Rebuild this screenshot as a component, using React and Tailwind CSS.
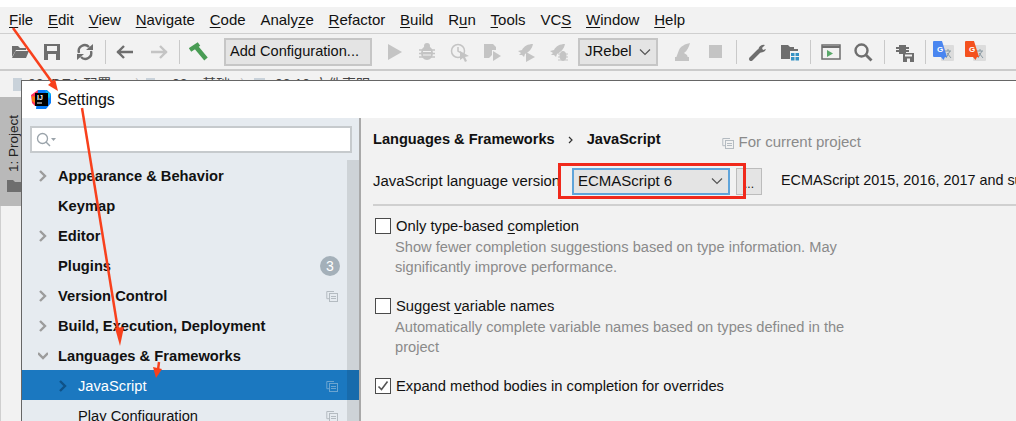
const menus = [
  ["", "F", "ile"],
  ["", "E", "dit"],
  ["", "V", "iew"],
  ["", "N", "avigate"],
  ["", "C", "ode"],
  ["Analy", "z", "e"],
  ["", "R", "efactor"],
  ["", "B", "uild"],
  ["R", "u", "n"],
  ["", "T", "ools"],
  ["VC", "S", ""],
  ["", "W", "indow"],
  ["", "H", "elp"],
];

const treeRows = [
  { label: "Appearance & Behavior", arrow: "right" },
  { label: "Keymap" },
  { label: "Editor", arrow: "right" },
  { label: "Plugins", badge: "3" },
  { label: "Version Control", arrow: "right", copy: true },
  { label: "Build, Execution, Deployment", arrow: "right" },
  { label: "Languages & Frameworks", arrow: "down" },
  { label: "JavaScript", arrow: "right", copy: true, child: true, selected: true },
  { label: "Play Configuration", copy: true, child: true },
];

const Icon = ({ children, className = "" }) => (
  <svg width="20" height="20" viewBox="0 0 20 20" className={className}>
    {children}
  </svg>
);

const Slot = ({ children, className = "" }) => (
  <div className={`w-[32px] h-[30px] shrink-0 flex items-center justify-center ${className}`}>{children}</div>
);

const Sep = ({ className = "" }) => <div className={`w-px h-[24px] bg-[#c9c9c9] shrink-0 ${className}`}></div>;

const Rocket = ({ color = "#c4c4c4" }) => (
  <path d="M17 2 C12 2 8 4 6 8 L2 9 L5 11 L3 13 L6 13 L8 15 L9 12 C13 10 16 7 17 2 Z" fill={color} />
);

const CopyIcon = ({ color = "#b4bbc1" }) => (
  <svg width="12" height="12" viewBox="0 0 12 12" className="shrink-0">
    <path d="M8 1.5H.8v7.2H3" fill="none" stroke={color} />
    <rect x="3.5" y="3.5" width="8" height="8" fill="none" stroke={color} />
    <path d="M5 6.5h5M5 8.5h5" stroke={color} />
  </svg>
);

const Chevron = ({ dir, color = "#9c9c9c" }) => (
  <svg width="10" height="12" viewBox="0 0 10 12">
    {dir === "down" ? (
      <path d="M0 3l5 5 5-5" fill="none" stroke={color} strokeWidth="2.4" />
    ) : (
      <path d="M2 1l5 5-5 5" fill="none" stroke={color} strokeWidth="2.4" />
    )}
  </svg>
);

const Check = ({ checked }) => (
  <div className="w-[16px] h-[16px] bg-white border border-[#4b4b4b] shrink-0 flex items-center justify-center">
    {checked && (
      <svg width="12" height="12" viewBox="0 0 12 12">
        <path d="M1.5 6.5l3 3 6-8" fill="none" stroke="#555" strokeWidth="1.6" />
      </svg>
    )}
  </div>
);

const Translate = ({ color }) => (
  <svg width="22" height="24" viewBox="0 0 22 24">
    <rect x="9" y="5" width="13" height="16" rx="1" fill="#dcdcdc" />
    <path d="M13 11h6M16 9v2M14 18l4-7M15 13l4 5" stroke="#8a9aa3" strokeWidth="1" fill="none" />
    <path d="M1 2a1 1 0 0 1 1-1h8l5 16H2a1 1 0 0 1-1-1z" fill={color} />
    <path d="M9 17h4l-1.5 3z" fill={color} />
    <text x="5" y="12" fontSize="8" fontWeight="700" fill="#fff" fontFamily="Liberation Sans">G</text>
  </svg>
);

function Toolbar() {
  return (
    <div className="h-[35px] bg-[#f2f2f2] flex items-center pl-[4px] border-b-2 border-[#cbcbcb] box-content">
      <Slot>
        <Icon>
          <path d="M2 4h6l2 2h6v2H6L2 15z" fill="#6e6e6e" />
          <path d="M5.500 9H19l-3 7H2z" fill="#6e6e6e" />
        </Icon>
      </Slot>
      <Slot>
        <Icon>
          <path fillRule="evenodd" d="M2 2h16v16H2zM5 4v5h10V4zM6 12v6h8v-6z" fill="#6e6e6e" />
        </Icon>
      </Slot>
      <Slot className="w-[33px]">
        <Icon>
          <path d="M4 11a6 6 0 0 1 10-6" fill="none" stroke="#6e6e6e" strokeWidth="2.400" />
          <path d="M16 9a6 6 0 0 1-10 6" fill="none" stroke="#6e6e6e" strokeWidth="2.400" />
          <path d="M11 8h7V2zM9 12H2v6z" fill="#6e6e6e" />
        </Icon>
      </Slot>
      <Sep className="ml-[4px]" />
      <Slot className="ml-[3px]">
        <Icon>
          <path d="M2 10h16M9 4l-6 6 6 6" fill="none" stroke="#6e6e6e" strokeWidth="2.400" />
        </Icon>
      </Slot>
      <Slot className="ml-[2px]">
        <Icon>
          <path d="M2 10h16M11 4l6 6-6 6" fill="none" stroke="#c4c4c4" strokeWidth="2.400" />
        </Icon>
      </Slot>
      <Sep className="ml-[4px]" />
      <Slot className="ml-[3px]">
        <Icon>
          <path d="M1 8L10 2M7 5l10 12" fill="none" stroke="#499c54" strokeWidth="4.500" />
        </Icon>
      </Slot>
      <div className="ml-[9px] w-[148px] h-[28px] bg-[#e4e4e4] border-2 border-[#c6c6c6] flex items-center pl-[4px] text-[14.600px] text-[#111] shrink-0">
        Add Configuration...
      </div>
      <Slot className="ml-[7px]">
        <Icon>
          <path d="M3 2l14 8-14 8z" fill="#c4c4c4" />
        </Icon>
      </Slot>
      <Slot>
        <Icon>
          <ellipse cx="10" cy="11" rx="6" ry="7" fill="#c4c4c4" />
          <circle cx="10" cy="4" r="3" fill="#c4c4c4" />
          <path d="M2 8h16M2 11.500h16M2 15h16" stroke="#c4c4c4" strokeWidth="1.600" />
          <path d="M6 9.500h8M6 13h8" stroke="#f2f2f2" />
        </Icon>
      </Slot>
      <Slot className="ml-[1px]">
        <Icon>
          <circle cx="8" cy="9" r="6.500" fill="none" stroke="#c4c4c4" strokeWidth="1.500" />
          <path d="M8 5v4l3 2" fill="none" stroke="#c4c4c4" strokeWidth="1.500" />
          <path d="M10 9l9 5-4 1 2 4-2 1-2-4-3 2z" fill="#c4c4c4" />
        </Icon>
      </Slot>
      <Slot>
        <Icon>
          <path d="M2 2h9l3 3v3h-4v5l-3 3H2z" fill="#c4c4c4" />
          <path d="M11 9l8 5-8 5z" fill="#c4c4c4" />
        </Icon>
      </Slot>
      <Slot className="ml-[2px]">
        <Icon>
          <Rocket />
          <path d="M10 10l9 5-9 5z" fill="#c4c4c4" />
        </Icon>
      </Slot>
      <Slot>
        <Icon>
          <Rocket />
          <ellipse cx="15" cy="14" rx="3.500" ry="5" fill="#c4c4c4" />
          <path d="M10 12h10M10 15h10M10 18h10" stroke="#c4c4c4" />
        </Icon>
      </Slot>
      <div className="ml-[4px] w-[80px] h-[28px] bg-[#e4e4e4] border-2 border-[#c6c6c6] flex items-center justify-between pl-[5px] pr-[5px] text-[15px] text-[#111] shrink-0">
        JRebel
        <svg width="12" height="8" viewBox="0 0 12 8">
          <path d="M1 1.500l5 5 5-5" fill="none" stroke="#555" strokeWidth="1.200" />
        </svg>
      </div>
      <Slot className="ml-[9px] w-[30px]">
        <Icon>
          <path d="M17 1C12 2 8 4 6 8L3 16h12l-1-3-3-2c3-2 5-6 6-10z" fill="#c4c4c4" />
          <path d="M2 15h14v4H2z" fill="#c4c4c4" />
        </Icon>
      </Slot>
      <Slot className="w-[30px]">
        <div className="w-[13px] h-[13px] bg-[#c4c4c4]"></div>
      </Slot>
      <Sep className="ml-[5px]" />
      <Slot className="ml-[5px]">
        <Icon>
          <path d="M3 17l8-8" stroke="#6e6e6e" strokeWidth="4" strokeLinecap="round" />
          <path d="M11 10a5 5 0 0 1 6-7l-3 3 1 2 3-1a5 5 0 0 1-7 3z" fill="#6e6e6e" />
        </Icon>
      </Slot>
      <Slot>
        <Icon>
          <path d="M1 3h7l2 2h4v2l4 0v2H10v8H1z" fill="#6e6e6e" />
          <path d="M11 11h3.500v3H11zM15.500 11H19v3h-3.500zM11 15h3.500v3.500H11zM15.500 15H19v3.500h-3.500z" fill="#3592c4" />
        </Icon>
      </Slot>
      <Sep className="ml-[4px]" />
      <Slot className="ml-[4px]">
        <Icon>
          <rect x="1" y="3" width="18" height="14" fill="none" stroke="#6e6e6e" strokeWidth="1.500" />
          <path d="M1 5h18" stroke="#6e6e6e" strokeWidth="2" />
          <path d="M6 8l6 3.500L6 15z" fill="#59a869" />
        </Icon>
      </Slot>
      <Slot>
        <Icon>
          <circle cx="8.500" cy="8.500" r="6" fill="none" stroke="#6e6e6e" strokeWidth="2.400" />
          <path d="M13 13l5.500 5.500" stroke="#6e6e6e" strokeWidth="2.800" />
        </Icon>
      </Slot>
      <Sep className="ml-[5px]" />
      <Slot className="ml-[4px]">
        <Icon>
          <path d="M1 5h3V3h7v2h3v2h-3v1h3v2h-3v2H4v-2H1V8h3V7H1z" fill="#6e6e6e" />
          <path fillRule="evenodd" d="M8 11h11v9H8zM10 12.500v2h7v-2zM12 16.500V20h3v-3.500z" fill="#6e6e6e" />
        </Icon>
      </Slot>
      <Sep className="ml-[4px]" />
      <Slot className="ml-[1px]">
        <Translate color="#4a86f0" />
      </Slot>
      <Slot>
        <Translate color="#f4511e" />
      </Slot>
    </div>
  );
}

function TreeRow({ row }) {
  return (
    <div
      className={`h-[30px] pt-[2px] flex items-center pr-[21px] ${row.selected ? "bg-[#1b78c0] text-white" : "text-[#111]"} ${row.child ? "pl-[36px]" : "pl-[16px]"}`}
    >
      <div className="w-[20px] shrink-0 flex items-center">
        {row.arrow && <Chevron dir={row.arrow} color={row.selected ? "#0f5288" : "#9c9c9c"} />}
      </div>
      <span className={`flex-1 text-[14.700px] ${row.child ? "" : "font-bold"}`}>{row.label}</span>
      {row.badge && (
        <span className="w-[20px] h-[20px] -mr-[2px] rounded-full bg-[#a4b0b9] text-white text-[14px] flex items-center justify-center">
          {row.badge}
        </span>
      )}
      {row.copy && <CopyIcon color={row.selected ? "#6ba4d0" : "#b4bbc1"} />}
    </div>
  );
}

function Option({ checked, label, mnemonic, desc, className = "" }) {
  return (
    <div className={className}>
      <div className="flex items-center gap-[5px] ml-[2px] text-[14.750px] text-[#111] h-[20px]">
        <Check checked={checked} />
        <span>
          {label[0]}
          {mnemonic && <span className="underline underline-offset-2">{mnemonic}</span>}
          {label[1]}
        </span>
      </div>
      {desc && <p className="ml-[22px] mt-[1px] w-[470px] text-[14.650px] leading-[20px] text-[#8a8a8a]">{desc}</p>}
    </div>
  );
}

export default function App() {
  return (
    <div className="relative w-[1016px] h-[421px] overflow-hidden bg-white font-['Liberation_Sans','Noto_Sans_CJK_SC',sans-serif]">
      <div className="h-[7px] bg-white"></div>
      {/* menu bar */}
      <div className="h-[26px] bg-[#f2f2f2] border-b border-[#cfcfcf] box-content flex items-center gap-[14.800px] pl-[9px] text-[15px] text-[#111]">
        {menus.map(([a, b, c]) => (
          <span key={a + b + c}>
            {a}
            <span className="underline underline-offset-2">{b}</span>
            {c}
          </span>
        ))}
      </div>
      <Toolbar />
      {/* navigation bar, mostly hidden by the dialog */}
      <div className="h-[26px] bg-[#f2f2f2] flex items-center pl-[13px] overflow-hidden whitespace-nowrap text-[14px] text-[#444]">
        <div className="w-[9px] h-[13px] bg-[#c9d2da] shrink-0"></div>
        <span className="ml-[6px] w-[107px] shrink-0 overflow-hidden">02.IDEA 配置</span>
        <span className="w-[11px] shrink-0 text-[#bbb]">〉</span>
        <div className="w-[9px] h-[13px] bg-[#c9d2da] shrink-0"></div>
        <span className="ml-[17px] w-[68px] shrink-0">03.x 基础</span>
        <span className="w-[14px] shrink-0 text-[#bbb]">〉</span>
        <div className="w-[11px] h-[13px] bg-[#c9d2da] shrink-0"></div>
        <span className="ml-[10px]">03.10 文件声明</span>
      </div>
      {/* project tool strip */}
      <div className="w-[21px] h-[109px] bg-[#b9b9b9] flex flex-col items-end pt-[18px]">
        <span className="[writing-mode:vertical-rl] rotate-180 text-[13.500px] leading-[14px] text-[#222]">1: Project</span>
        <svg width="14" height="12" viewBox="0 0 14 12" className="mt-[8px]">
          <path d="M0 0h6l2 2h6v10H0z" fill="#6e6e6e" />
        </svg>
      </div>
      <div className="w-[21px] h-[215px] bg-[#f2f2f2] border-l border-[#cfcfcf]"></div>

      {/* settings dialog */}
      <div className="absolute left-[21px] top-[80px] w-[995px] h-[341px] bg-white border-l border-t border-[#666] flex flex-col">
        <div className="h-[37px] shrink-0 flex items-center pl-[9px] gap-[5px] text-[16px] text-[#111]">
          <svg width="21" height="21" viewBox="0 0 21 21" className="shrink-0">
            <path d="M0 6l7-5 3 4-6 12-3-3z" fill="#fe315d" />
            <path d="M1 7l6 1-3 6-3-2z" fill="#f97a12" />
            <path d="M7 1h9l4 4v9l-5 6-10 0z" fill="#087cfa" />
            <path d="M14 1l6 4-2 5z" fill="#07c3f2" />
            <rect x="4" y="4" width="13" height="13" fill="#000" />
            <text x="6" y="11" fontSize="7" fontWeight="700" fill="#fff" fontFamily="Liberation Sans">IJ</text>
            <path d="M6 14h5" stroke="#fff" />
          </svg>
          Settings
        </div>
        <div className="flex-1 flex min-h-0">
          {/* left tree */}
          <div className="relative w-[337px] shrink-0 bg-[#e6ebf0] overflow-hidden">
            <div className="mx-[8px] mt-[8px] h-[27px] w-[322px] bg-white border-2 border-[#c6cacd] flex items-center pl-[4px]">
              <svg width="20" height="16" viewBox="0 0 20 16">
                <circle cx="6.500" cy="6.500" r="5" fill="none" stroke="#9aa3aa" strokeWidth="1.300" />
                <path d="M10 10l4 4" stroke="#9aa3aa" strokeWidth="1.500" />
                <path d="M15 6h5l-2.500 3z" fill="#9aa3aa" />
              </svg>
            </div>
            <div className="mt-[7px]">
              {treeRows.map((row) => (
                <TreeRow key={row.label} row={row} />
              ))}
            </div>
            <div className="absolute right-0 top-[42px] bottom-0 w-[12px] bg-black/10"></div>
          </div>
          <div className="w-[2px] shrink-0 bg-[#a9a9a9]"></div>
          {/* right panel */}
          <div className="flex-1 bg-[#f2f2f2] pl-[12px] overflow-hidden">
            <div className="h-[42px] flex items-center text-[14.600px] text-[#111] pt-[1px]">
              <span className="font-bold">Languages &amp; Frameworks</span>
              <svg width="6" height="8" viewBox="0 0 6 8" className="ml-[13px] mr-[13px]">
                <path d="M1 1l3 3-3 3" fill="none" stroke="#333" strokeWidth="1.200" />
              </svg>
              <span className="font-bold">JavaScript</span>
              <div className="ml-[61px] mt-[6px] flex items-center gap-[5px] text-[#8a8a8a] text-[15px]">
                <CopyIcon />
                For current project
              </div>
            </div>
            <div className="h-[28px] mt-[7px] flex items-center text-[15px] text-[#111] whitespace-nowrap">
              <span className="w-[199px] shrink-0 text-[14.900px]">JavaScript language version</span>
              <div className="w-[158px] h-[27px] shrink-0 bg-[#e4e4e4] border-2 border-[#5fa4da] flex items-center justify-between pl-[4px] pr-[5px]">
                ECMAScript 6
                <svg width="12" height="8" viewBox="0 0 12 8">
                  <path d="M1 1.500l5 5 5-5" fill="none" stroke="#555" strokeWidth="1.200" />
                </svg>
              </div>
              <div className="ml-[6px] w-[26px] h-[27px] shrink-0 bg-[#e4e4e4] border border-[#bcbcbc] flex items-center justify-center pt-[6px] text-[12px]">
                ...
              </div>
              <span className="ml-[19px] text-[14.400px]">ECMAScript 2015, 2016, 2017 and sub</span>
            </div>
            <div className="h-[2px] mt-[9px] bg-[#d0d0d0]"></div>
            <Option
              className="mt-[10px]"
              label={["Only type-based ", "ompletion"]}
              mnemonic="c"
              desc="Show fewer completion suggestions based on type information. May significantly improve performance."
            />
            <Option
              className="mt-[19px]"
              label={["Suggest ", "ariable names"]}
              mnemonic="v"
              desc="Automatically complete variable names based on types defined in the project"
            />
            <Option className="mt-[19px]" checked label={["Expand method bodies in completion for overrides", ""]} />
          </div>
        </div>
      </div>

      {/* hand-drawn annotations */}
      <div className="absolute left-[558px] top-[163px] w-[188px] h-[36px] border-[3px] border-[#f0291b]"></div>
      <svg width="1016" height="421" viewBox="0 0 1016 421" className="absolute left-0 top-0 pointer-events-none">
        <path d="M13 28L54 85" stroke="#f8401c" strokeWidth="2.500" fill="none" />
        <path d="M58 91L48 85L55 79z" fill="#f8401c" />
        <path d="M82 108L118 330" stroke="#f8401c" strokeWidth="2.500" fill="none" />
        <path d="M120 346L115 328L124 327z" fill="#f8401c" />
        <path d="M159 362L158 370" stroke="#f8401c" strokeWidth="2.500" fill="none" />
        <path d="M156 378L153 367L162 369z" fill="#f8401c" />
      </svg>
    </div>
  );
}
